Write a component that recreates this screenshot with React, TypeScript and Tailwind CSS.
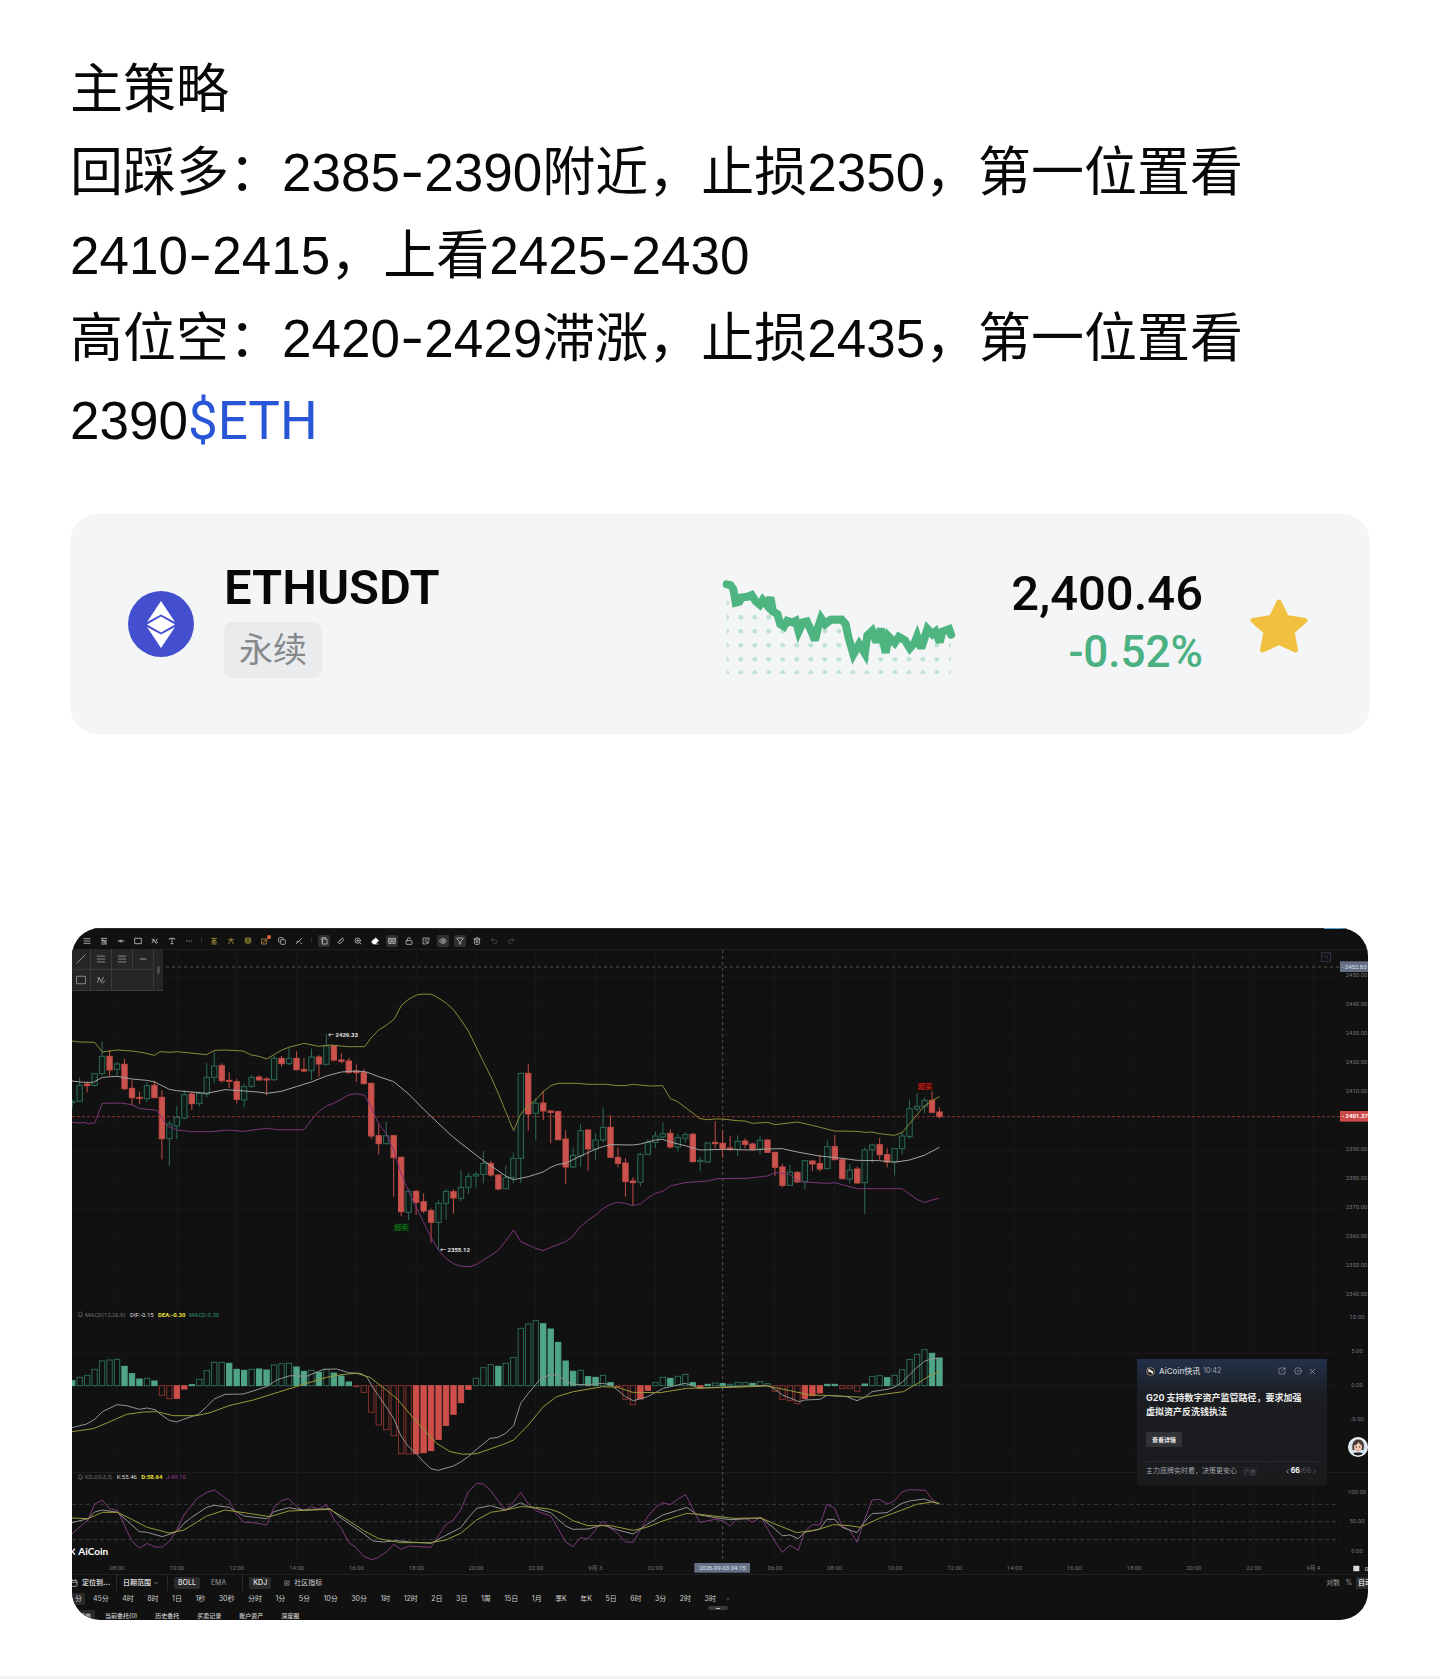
import React from "react";
import {
  AlignJustify,
  Calendar,
  ChevronDown,
  ChevronLeft,
  ChevronRight,
  CircleDot,
  Copy,
  Ellipsis,
  Eraser,
  Eye,
  Filter,
  LockOpen,
  Minus,
  Redo2,
  Slash,
  SquareArrowOutUpRight,
  SquarePen,
  Trash2,
  Type,
  Undo2,
  X,
  ZoomIn,
} from "lucide-react";

/* ---------- chart data (units: a third of a pixel) ---------- */

// kind, open/close top, bottom, high, low
const CANDLES = `g 545 548 537 565|g 496 544 473 544|r 492 497 485 517|g 461 496 461 500|g 409 461 365 467|r 409 450 390 468|g 432 448 426 466|r 433 506 416 511|r 505 533 481 557|r 532 535 515 552|g 497 536 486 547|r 496 533 482 533|r 532 656 511 718|g 612 656 602 738|g 592 618 558 657|g 524 594 512 598|r 522 551 515 570|g 520 551 515 560|g 472 522 430 533|g 438 472 394 490|r 437 482 430 488|r 481 484 457 504|r 485 538 476 550|g 500 540 490 562|g 472 499 466 504|r 471 480 466 482|r 477 480 471 526|g 415 479 407 484|r 415 431 408 440|g 415 431 381 436|r 415 449 394 452|r 448 453 414 456|g 411 452 386 479|r 411 432 406 470|g 378 433 343 436|r 377 420 374 425|r 420 424 400 430|r 423 457 414 462|r 453 458 433 486|r 457 491 447 493|r 490 648 488 656|r 647 671 612 703|g 647 671 606 674|r 647 713 645 830|r 712 875 710 889|g 814 877 806 900|r 814 847 810 885|r 845 873 820 879|r 872 907 866 968|g 850 907 841 990|g 814 850 806 899|r 815 834 808 880|g 802 835 752 843|g 769 802 760 822|g 763 768 755 803|g 730 763 693 790|r 730 765 722 770|r 765 807 762 810|g 773 806 738 808|g 715 772 698 790|g 460 715 458 790|r 460 582 432 632|g 550 580 534 661|r 549 573 512 600|r 573 577 571 670|r 575 659 572 661|r 657 741 630 792|g 706 741 683 745|g 632 708 612 740|r 630 687 628 752|g 660 687 640 720|g 622 660 562 668|r 622 712 586 714|r 712 730 682 742|r 729 785 714 830|r 783 788 772 855|g 703 787 698 798|g 667 703 658 706|g 648 667 635 685|g 641 651 608 655|r 640 681 628 686|g 653 681 642 694|g 644 655 636 668|r 643 725 638 727|g 721 725 712 754|g 669 726 668 728|r 667 671 604 685|r 670 686 630 714|r 684 689 648 692|g 664 688 646 708|r 663 673 655 685|r 672 689 668 692|g 661 687 649 703|r 660 697 658 699|r 697 742 695 768|r 741 796 732 802|g 756 796 733 797|r 757 786 753 788|g 722 785 721 808|r 723 732 722 754|r 731 747 704 754|g 680 746 662 748|r 680 719 645 721|r 719 776 717 778|g 750 777 732 790|r 747 789 740 790|g 690 788 682 882|g 675 689 672 729|r 674 704 654 719|r 704 726 684 742|g 686 724 684 766|g 648 686 636 704|g 566 650 538 656|g 559 567 521 575|g 541 559 532 580|r 541 577 515 579|r 576 590 562 596`
  .split("|")
  .map((row) => {
    const [kind, top, bottom, high, low] = row.split(" ");
    return { up: kind === "g", top: +top, bottom: +bottom, high: +high, low: +low };
  });

// bar ends relative to the MACD pane; an "f" marks a solid bar
const MACD_BARS =
  "302f 292 286 268 243 240 238 259f 281f 297f 295 303f 346 356 355f 327f 314f 298 272 247 247 250f 268f 271f 268 267f 270f 255 251 250 261f 274f 271 277f 268 279f 288f 306f 320 337 397 435 449 467 521 522 521f 518f 512f 478f 436f 403f 368f 328f 295 263 254 259f 250 232 145 132 122 131f 147f 187f 243f 274f 271 290f 292f 286 308f 320 358 374 357f 331f 308 292 295f 289 283 308f 324f 313f 309 311f 313 307 307 310f 305 311 334 358 362 371 355f 347f 339f 313f 313f 325 325 334 312f 289 287 293f 286 269 238 223 209 220f 234f".split(
    " ",
  );

const UPPER =
  "36,363 60,366 104,367 127,396 171,390 215,393 250,398 284,406 300,395 330,397 352,395 440,404 463,391 495,390 550,393 574,405 597,409 620,417 664,391 686,382 732,370 776,379 810,375 866,380 914,380 933,354 956,330 980,315 1003,297 1025,255 1047,237 1070,225 1090,222 1115,223 1137,235 1160,250 1182,271 1203,300 1225,333 1250,384 1270,425 1292,469 1315,520 1337,575 1361,632 1382,582 1404,558 1427,540 1449,516 1472,497 1494,490 1550,490 1584,493 1640,493 1662,496 1696,497 1718,493 1770,498 1808,497 1831,536 1853,545 1920,596 1943,599 1965,597 1988,597 2032,602 2055,603 2077,610 2122,607 2145,614 2212,606 2257,616 2324,633 2391,634 2414,637 2436,636 2458,641 2503,646 2526,638 2548,612 2593,558 2616,542 2638,530";
const MIDDLE =
  "36,483 70,487 100,487 127,472 171,469 215,477 260,481 284,486 328,508 350,512 395,516 440,520 495,509 540,512 595,516 620,520 664,514 709,500 754,486 799,468 844,456 890,453 920,456 956,470 1001,485 1046,522 1090,567 1135,610 1180,652 1225,687 1270,722 1314,752 1337,768 1361,779 1405,770 1427,763 1449,756 1472,742 1494,733 1517,730 1561,708 1606,688 1628,680 1651,674 1718,675 1741,672 1786,660 1808,658 1831,666 1875,677 1920,690 1988,688 2080,690 2122,687 2167,686 2212,696 2279,708 2346,715 2391,721 2458,722 2503,727 2548,720 2593,706 2638,682";
const LOWER =
  "36,607 60,609 75,608 85,611 104,609 127,550 185,549 215,554 240,566 290,571 305,592 320,616 350,630 395,635 455,635 500,630 550,634 620,625 650,629 732,629 754,600 776,575 799,558 821,550 866,525 888,521 914,526 933,560 956,612 978,640 1001,690 1023,760 1046,815 1068,860 1090,905 1113,952 1135,990 1157,1015 1180,1031 1205,1039 1230,1040 1250,1033 1314,992 1337,963 1361,930 1382,965 1427,985 1449,992 1472,982 1517,965 1539,948 1561,920 1584,901 1606,886 1628,866 1651,853 1673,847 1696,850 1718,857 1741,852 1763,834 1786,820 1808,814 1831,798 1875,788 1943,783 1970,776 2060,775 2122,768 2145,758 2189,763 2212,782 2234,786 2301,790 2324,788 2391,806 2526,806 2571,838 2593,848 2616,840 2638,835";
const DIF =
  "36,443 80,432 104,418 127,395 171,374 200,377 238,388 262,384 288,390 300,402 328,421 350,426 370,418 415,403 440,380 463,357 495,343 550,342 620,320 650,300 690,287 740,289 790,268 830,267 866,278 900,280 920,290 940,325 956,347 1001,415 1023,468 1046,500 1068,520 1090,545 1113,566 1135,571 1180,558 1202,546 1225,530 1250,508 1290,475 1314,472 1337,460 1361,437 1382,370 1405,340 1440,298 1472,283 1494,286 1517,303 1539,313 1584,314 1628,310 1651,314 1673,330 1696,350 1720,362 1763,350 1810,325 1875,310 1920,324 2010,320 2122,316 2145,328 2167,345 2217,365 2234,360 2280,358 2301,346 2360,350 2391,362 2414,352 2436,335 2481,328 2503,322 2526,307 2548,285 2571,262 2593,244 2616,236 2638,235";
const DEA =
  "36,455 100,446 150,425 200,403 250,396 290,395 340,407 410,407 450,398 510,376 580,360 660,335 740,310 800,292 850,283 890,280 930,292 970,323 1010,355 1050,402 1090,448 1130,490 1170,515 1210,523 1250,521 1290,507 1330,493 1361,480 1405,435 1427,408 1450,380 1490,350 1540,335 1628,320 1673,322 1718,337 1800,338 1880,325 2020,322 2122,318 2190,332 2250,345 2320,347 2410,352 2470,343 2530,335 2580,306 2610,286 2638,276";
const J_LINE =
  "36,762 60,740 84,720 104,672 127,660 148,686 173,692 195,740 215,782 238,805 262,790 284,801 307,801 328,784 350,750 372,705 412,655 440,637 463,630 485,646 507,662 529,702 552,727 575,727 620,735 642,682 664,662 686,656 709,678 731,693 754,680 776,688 799,674 821,716 844,745 866,787 888,803 911,829 936,839 956,832 980,815 1001,793 1023,808 1046,798 1113,802 1130,775 1157,735 1180,720 1202,690 1225,635 1250,610 1270,612 1292,632 1314,662 1337,690 1361,665 1382,637 1405,672 1427,692 1472,708 1494,745 1517,786 1539,800 1561,773 1584,777 1628,723 1651,745 1673,760 1696,786 1720,787 1741,750 1763,710 1786,683 1808,668 1831,674 1853,658 1877,644 1900,690 1920,727 1965,718 1988,722 2010,738 2032,718 2055,714 2077,727 2103,711 2122,745 2145,785 2167,817 2190,796 2215,811 2234,755 2257,734 2279,735 2301,673 2324,685 2346,738 2369,750 2391,787 2414,718 2436,660 2458,658 2483,672 2503,663 2526,636 2548,629 2596,631 2616,657 2638,674";
const K_LINE =
  "36,728 84,716 104,696 127,690 173,697 195,717 238,755 262,757 307,770 350,755 372,730 395,712 440,682 463,676 507,682 529,695 552,708 620,716 642,695 686,683 731,690 810,686 844,715 888,745 911,761 940,783 970,786 1010,782 1050,786 1113,790 1150,770 1202,743 1225,713 1250,685 1292,677 1337,690 1382,668 1405,680 1427,685 1472,698 1517,738 1539,748 1584,747 1628,735 1673,750 1720,762 1763,732 1808,705 1853,691 1880,682 1910,703 1965,713 2010,719 2103,714 2145,747 2167,767 2190,765 2215,776 2234,757 2279,747 2301,718 2324,718 2346,742 2391,758 2414,725 2436,701 2481,698 2526,670 2548,663 2593,657 2638,672";
const D_LINE =
  "36,714 84,716 127,697 173,697 215,718 262,742 328,759 372,750 440,708 495,690 552,698 630,710 686,693 810,688 866,722 911,752 956,776 1023,788 1113,788 1157,780 1202,760 1250,720 1292,697 1337,690 1382,680 1427,682 1472,688 1500,698 1539,722 1584,737 1651,737 1720,751 1760,742 1808,723 1880,700 1920,703 2020,715 2103,714 2145,732 2210,758 2270,750 2320,734 2369,737 2400,742 2458,715 2526,690 2570,673 2616,666 2638,670";

const TIMES: [number, string][] = [
  [171, "08:00"], [351, "10:00"], [530, "12:00"], [710, "14:00"], [889, "16:00"], [1069, "18:00"], [1248, "20:00"],
  [1427, "22:00"], [1606, "9月 3"], [1786, "02:00"], [2145, "06:00"], [2324, "08:00"], [2504, "10:00"],
  [2684, "12:00"], [2863, "14:00"], [3043, "16:00"], [3222, "18:00"], [3401, "20:00"], [3581, "22:00"], [3760, "9月 4"],
];
const PRICES = ["2450.00", "2440.00", "2430.00", "2420.00", "2410.00", "", "2390.00", "2380.00", "2370.00", "2360.00", "2350.00", "2340.00"];
const OSC: [number, string][] = [[1196, "10.00"], [1299, "5.00"], [1402, "0.00"], [1504, "-5.00"], [1721, "100.00"], [1809, "50.00"], [1898, "0.00"]];
const STEP = 22.43;

function Line({ points, color }: { points: string; color: string }) {
  return <polyline points={points} fill="none" stroke={color} strokeWidth="3" strokeLinejoin="round" />;
}

function Chart() {
  return (
    <svg
      viewBox="36 87 3888 1878"
      className="block w-full font-['Roboto','Noto_Sans_CJK_SC',sans-serif]"
      role="img"
      aria-label="ETHUSDT K线图"
    >
      <g stroke="#191919" strokeWidth="3">
        {TIMES.map(([x]) => (
          <line key={x} x1={x} x2={x} y1="90" y2="1920" />
        ))}
        {PRICES.map((_, i) => (
          <line key={i} x1="36" x2="3840" y1={171 + i * 87} y2={171 + i * 87} />
        ))}
        <line x1="36" x2="3840" y1="1299" y2="1299" />
        <line x1="36" x2="3840" y1="1397" y2="1397" />
        <line x1="36" x2="3840" y1="1602" y2="1602" />
      </g>
      <g stroke="#222222" strokeWidth="3">
        <line x1="36" x2="3924" y1="88" y2="88" />
        <line x1="36" x2="3924" y1="1658" y2="1658" />
      </g>

      <g stroke="#555555" strokeWidth="3" strokeDasharray="9 9">
        <line x1="318" x2="3840" y1="141" y2="141" />
        <line x1="1988" x2="1988" y1="90" y2="1925" />
      </g>
      <g stroke="#3c3c3c" strokeWidth="3" strokeDasharray="12 9">
        <line x1="36" x2="3840" y1="1753" y2="1753" />
        <line x1="36" x2="3840" y1="1805" y2="1805" />
        <line x1="36" x2="3840" y1="1859" y2="1859" />
      </g>
      <line x1="36" x2="3840" y1="590" y2="590" stroke="#8f3330" strokeWidth="3" strokeDasharray="9 6" />

      {CANDLES.map((c, i) => {
        const x = 59 + (i - 1) * STEP;
        const color = c.up ? "#2c6b56" : "#c24c46";
        return (
          <g key={i} stroke={color} strokeWidth="3">
            <line x1={x} x2={x} y1={c.high} y2={c.top} />
            <line x1={x} x2={x} y1={c.bottom} y2={c.low} />
            <rect
              x={x - 8}
              y={c.top}
              width="16"
              height={Math.max(c.bottom - c.top, 2)}
              fill={c.up ? "#0f1a17" : "#cb534d"}
            />
          </g>
        );
      })}

      <Line points={UPPER} color="#8c8a35" />
      <Line points={MIDDLE} color="#a3a3a3" />
      <Line points={LOWER} color="#7b3578" />

      <g fontSize="18" fontWeight="700" fill="#e6e6e6">
        <text x="804" y="350">← 2429.33</text>
        <text x="1140" y="997">← 2355.12</text>
      </g>
      <rect x="1001" y="910" width="46" height="22" fill="#0a2a0c" />
      <text x="1024" y="929" fontSize="21" textAnchor="middle" fill="#12801c">超卖</text>
      <rect x="2573" y="488" width="46" height="22" fill="#3a0a0a" />
      <text x="2595" y="507" fontSize="21" textAnchor="middle" fill="#e0261f">超买</text>

      <g transform="translate(0 1080)">
        {MACD_BARS.map((bar, i) => {
          const y = parseInt(bar, 10);
          const up = y < 317;
          const solid = bar.endsWith("f");
          const color = up ? "#4fa585" : "#cb4f48";
          const dim = up ? "#2c6b56" : "#84322e";
          return (
            <rect
              key={i}
              x={59 + (i - 1) * STEP - 8}
              y={Math.min(y, 317)}
              width="16"
              height={Math.max(Math.abs(y - 317), 2)}
              stroke={solid ? color : dim}
              strokeWidth="3"
              fill={solid ? color : "#111111"}
            />
          );
        })}
        <Line points={DIF} color="#929292" />
        <Line points={DEA} color="#9a9836" />
        <Line points={J_LINE} color="#7f3a7c" />
        <Line points={K_LINE} color="#929292" />
        <Line points={D_LINE} color="#9a9836" />
        <g fontSize="18" fill="#6f6f6f">
          <path d="M54 108h14M56 108v-7a5 5 0 0 1 10 0v7M59 111h4" fill="none" stroke="#6f6f6f" strokeWidth="2" />
          <text x="75" y="110">MACD(12,26,9)</text>
          <text x="210" y="110" fill="#dddddd">DIF:-0.15</text>
          <text x="294" y="110" fill="#e5e233" fontWeight="700">DEA:-0.30</text>
          <text x="387" y="110" fill="#2f8f70">MACD:0.30</text>
          <path d="M54 596h14M56 596v-7a5 5 0 0 1 10 0v7M59 599h4" fill="none" stroke="#6f6f6f" strokeWidth="2" />
          <text x="75" y="598">KDJ(9,3,3)</text>
          <text x="170" y="598" fill="#dddddd">K:55.46</text>
          <text x="244" y="598" fill="#e5e233" fontWeight="700">D:58.64</text>
          <text x="318" y="598" fill="#9b3a97">J:49.10</text>
        </g>
        <path d="M45 806l-8 9 8 9" fill="none" stroke="#ffffff" strokeWidth="4" />
        <text x="55" y="825" fontSize="30" fontWeight="700" fill="#ffffff" className="font-['Lato',sans-serif]">
          AiCoin
        </text>
      </g>

      <g fontSize="18" fill="#74747f" textAnchor="middle">
        {TIMES.map(([x, t]) => (
          <text key={x} x={x} y="1949">{t}</text>
        ))}
        {PRICES.map((p, i) => (
          <text key={i} x="3857" y={171 + i * 87} textAnchor="start">{p}</text>
        ))}
        {OSC.map(([y, t]) => (
          <text key={y} x="3891" y={y}>{t}</text>
        ))}
      </g>

      <rect x="1903" y="1929" width="167" height="29" fill="#667085" />
      <text x="1987" y="1950" fontSize="18" textAnchor="middle" fill="#dfe3ea">2026-09-03 04:15</text>
      <rect x="3840" y="124" width="90" height="32" fill="#667085" />
      <text x="3845" y="147" fontSize="18" fill="#dfe3ea">- 2452.83</text>
      <rect x="3840" y="573" width="90" height="32" fill="#cb4a48" />
      <text x="3845" y="595" fontSize="18" fontWeight="700" fill="#ffffff">- 2401.37</text>
      <path d="M3785 98h27v27h-27zM3791 104l8 7m0 0 5-5m-5 5 6 7" fill="none" stroke="#34344a" strokeWidth="3" />
      <g fill="#dddddd">
        <rect x="3880" y="1937" width="18" height="17" rx="2" />
        <text x="3914" y="1952" fontSize="18">0</text>
      </g>
      <path d="M36 1964H3924" stroke="#242424" strokeWidth="3" />
    </svg>
  );
}

/* ---------- drawing tools ---------- */

type Tool = { icon: React.ReactNode; label: string; tone?: string; on?: boolean };

const glyph = (d: string) => (
  <svg viewBox="0 0 24 24" className="size-2" fill="none" stroke="currentColor" strokeWidth="2.5">
    <path d={d} />
  </svg>
);
const lucide = (Icon: React.ElementType) => <Icon className="size-2" strokeWidth={2.5} />;

const TOOL_GROUPS: Tool[][] = [
  [
    { icon: lucide(AlignJustify), label: "平行线" },
    { icon: glyph("M3 4h18M3 10h18M3 15h18M3 21h18M5 4l14 17"), label: "斐波那契" },
    { icon: glyph("M2 12h20M8 12a3 3 0 1 0 6 0 3 3 0 1 0-6 0"), label: "水平线" },
    { icon: glyph("M2 4h20v16H2z"), label: "矩形" },
    { icon: glyph("M3 19 8 6l5 12 5-13M3 5l5 6M15 20l6-5"), label: "波浪" },
    { icon: lucide(Type), label: "文字" },
    { icon: lucide(Ellipsis), label: "更多", tone: "text-[#666666]" },
  ],
  [
    { icon: glyph("M3 4h18M6 10h12M3 15h18M4 21h16M12 4v17"), label: "主力", tone: "text-[#a8913d]" },
    { icon: glyph("M3 8h18M12 2v7M12 9 4 21M12 9l8 12"), label: "大单", tone: "text-[#a8913d]" },
    { icon: glyph("M4 3h16v13l-8 5-8-5zM8 5v12M12 5v13M16 5v12"), label: "筹码", tone: "text-[#a8913d]" },
    { icon: glyph("M2 6h14v15H2zM5 18 22 3"), label: "信号", tone: "text-[#b58a3a]" },
    { icon: lucide(Copy), label: "复制" },
    { icon: glyph("M3 21 20 4M14 15l7 6M4 14h6"), label: "画笔" },
  ],
  [
    { icon: glyph("M4 2h13v4M7 6h14v15H7zM2 6h5v12"), label: "磁吸", on: true },
    { icon: glyph("M3 16 16 3l5 5L8 21zM10 9l2 2M13 6l2 2M7 12l2 2"), label: "测量" },
    { icon: lucide(ZoomIn), label: "放大" },
    { icon: <Eraser className="size-2" fill="currentColor" strokeWidth={2} />, label: "橡皮", tone: "text-white" },
    { icon: glyph("M2 4h20v15H2zM6 4v15M10 7l4 9M14 7l-4 9M18 4v15"), label: "对比", on: true },
    { icon: lucide(LockOpen), label: "锁定" },
    { icon: glyph("M21 12V3H3v18h9M8 9h9M8 14h4M14 15h7l-5 6z"), label: "备注" },
    { icon: lucide(Eye), label: "显示", on: true },
    { icon: lucide(Filter), label: "筛选", on: true },
    { icon: lucide(Trash2), label: "删除" },
    { icon: lucide(Undo2), label: "撤销", tone: "text-[#4a4a4a]" },
    { icon: lucide(Redo2), label: "重做", tone: "text-[#4a4a4a]" },
  ],
];

function Toolbar() {
  return (
    <div className="relative flex h-[21px] items-end border-t border-[#2a2a2a] pb-0.5 pl-1.5">
      {TOOL_GROUPS.map((group, g) => (
        <React.Fragment key={g}>
          {g > 0 && <span className="mr-[3px] ml-1 mb-1 h-1.5 w-px bg-[#2b2b2b]" />}
          {group.map((tool) => (
            <button
              key={tool.label}
              type="button"
              aria-label={tool.label}
              className={`relative flex h-3 w-[17px] items-center justify-center ${tool.tone ?? "text-[#bdbdbd]"}`}
            >
              <span className={`flex size-3 items-center justify-center rounded-xs ${tool.on ? "bg-[#303030]" : ""}`}>
                {tool.icon}
              </span>
              {tool.label === "信号" && <i className="absolute top-0 right-0.5 size-1 rounded-full bg-[#e8663c]" />}
            </button>
          ))}
        </React.Fragment>
      ))}
      <span className="absolute -top-px right-5 h-px w-6 bg-[#5fa8d8]" />
    </div>
  );
}

function DrawPanel() {
  const cell = "flex items-center justify-center border-r border-b border-[#3a3a3a]";
  return (
    <div className="absolute top-0 left-0 grid h-[42px] grid-cols-[19px_21px_21px_21px_9px] grid-rows-2 bg-[#252525] text-[#9c9c9c]">
      <button type="button" aria-label="线段" className={cell}><Slash className="size-2.5" strokeWidth={2} /></button>
      <button type="button" aria-label="平行线" className={cell}><AlignJustify className="size-2.5" strokeWidth={2} /></button>
      <button type="button" aria-label="通道" className={cell}><AlignJustify className="size-2.5" strokeWidth={2} /></button>
      <button type="button" aria-label="水平线" className={cell}><Minus className="size-2.5" strokeWidth={2.5} /></button>
      <span className="row-span-2 flex items-center justify-center border-b border-[#3a3a3a]">
        <i className="h-2 w-[3px] rounded-full bg-[#4a4a4a]" />
      </span>
      <button type="button" aria-label="矩形" className={cell}>
        <svg viewBox="0 0 24 24" className="size-2.5" fill="none" stroke="currentColor" strokeWidth="2"><path d="M1 3h22v18H1z" /></svg>
      </button>
      <button type="button" aria-label="波浪" className={cell}>
        <svg viewBox="0 0 24 24" className="size-2.5" fill="none" stroke="currentColor" strokeWidth="2"><path d="M3 19 8 6l5 12 5-13M3 5l5 6M15 20l7-6" /></svg>
      </button>
      <span className="col-span-2 border-r border-b border-[#3a3a3a]" />
    </div>
  );
}

/* ---------- news popup ---------- */

function NewsPopup() {
  return (
    <aside className="absolute top-[410px] right-[41px] flex h-[126px] w-[190px] flex-col bg-linear-to-b from-[#22304a] via-[#1b1d21] via-30% to-[#1a1b1d] px-[9px] text-[#a0a4ab]">
      <header className="flex h-6 items-center text-[7px]">
        <svg viewBox="0 0 24 24" className="mr-1 size-[9px] shrink-0">
          <circle cx="12" cy="12" r="10.5" fill="#1a1a1a" stroke="#b9a68a" strokeWidth="2" />
          <path d="M5 8c5-1 8 0 9 4s3 4 5 3M6 14c3-4 9-4 12-1" fill="none" stroke="#ffffff" strokeWidth="3" />
        </svg>
        <b className="text-[8px] font-medium whitespace-nowrap text-[#c9ccd2]">AiCoin快讯</b>
        <time className="ml-[3px]">10:42</time>
        <button type="button" aria-label="打开" className="ml-auto"><SquareArrowOutUpRight className="size-2" strokeWidth={2} /></button>
        <button type="button" aria-label="设置" className="ml-2"><CircleDot className="size-2" strokeWidth={2} /></button>
        <button type="button" aria-label="关闭" className="mr-px ml-1.5"><X className="size-[9px]" strokeWidth={2} /></button>
      </header>
      <h2 className="mt-2 text-[9px] leading-[14px] font-bold whitespace-nowrap text-[#eeeeee]">
        G20 支持数字资产监管路径，要求加强
        <br />
        虚拟资产反洗钱执法
      </h2>
      <button type="button" className="mt-[13px] h-[15px] w-9 rounded-xs bg-[#303236] text-[6px] font-bold text-[#eeeeee]">
        查看详情
      </button>
      <footer className="mt-3.5 flex items-center border-t border-[#2a2b2e] pt-1 text-[7px] whitespace-nowrap">
        主力底牌实时看，决策更安心
        <span className="ml-1.5 bg-[#222326] px-px text-[6px] text-[#55585e]">广告</span>
        <span className="ml-auto flex items-center">
          <ChevronLeft className="size-[7px]" strokeWidth={3} />
          <b className="text-white">66</b>
          <span className="text-[#55585e]">/66</span>
          <ChevronRight className="size-[7px] text-[#55585e]" strokeWidth={3} />
        </span>
      </footer>
    </aside>
  );
}

function Avatar() {
  return (
    <svg viewBox="0 0 40 40" className="absolute top-[488px] right-0 size-5" role="img" aria-label="客服">
      <defs>
        <clipPath id="face"><circle cx="20" cy="20" r="17" /></clipPath>
      </defs>
      <circle cx="20" cy="20" r="20" fill="#f2f6f8" />
      <g clipPath="url(#face)">
        <rect width="40" height="40" fill="#cfe0ea" />
        <path d="M9 26C7 10 13 5 21 5s13 7 10 21z" fill="#4b3836" />
        <ellipse cx="20" cy="20" rx="8" ry="10" fill="#f0cbb8" />
        <path d="M12 17c5-1 8-4 9-7 2 4 4 6 8 7-1-9-5-11-9-11s-9 3-8 11z" fill="#4b3836" />
        <path d="M8 40c0-8 6-9 12-9s12 1 12 9z" fill="#1d1d22" />
        <circle cx="16.500" cy="20" r="1.300" fill="#332222" />
        <circle cx="23.500" cy="20" r="1.300" fill="#332222" />
        <path d="M18 26q2 1.500 4 0" fill="none" stroke="#c65a58" strokeWidth="1.500" />
      </g>
    </svg>
  );
}

/* ---------- bottom controls ---------- */

const PERIODS = ["45分", "4时", "8时", "1日", "1秒", "30秒", "分时", "1分", "5分", "10分", "30分", "1时", "12时", "2日", "3日", "1周", "15日", "1月", "季K", "年K", "5日", "6时", "3分", "2时", "3时"];
const TABS = ["当前委托(0)", "历史委托", "买卖记录", "账户资产", "深度图"];

function BottomBars() {
  const chip = "h-3 rounded-xs bg-[#2a2a2a] px-1 font-medium text-[#e2e2e2]";
  return (
    <div className="flex h-[45px] flex-col overflow-hidden text-[7px] leading-3 whitespace-nowrap text-[#d0d0d0]">
      <div className="flex h-4 shrink-0 items-center">
        <button type="button" className="flex items-center font-bold">
          <Calendar className="mr-1 -ml-0.5 size-2" strokeWidth={2} />定位到...
        </button>
        <span className="mx-1.5 h-4 w-px bg-[#2a2a2a]" />
        <button type="button" className="flex items-center gap-0.5 font-bold">
          日期范围<ChevronDown className="size-1.5" strokeWidth={2} />
        </button>
        <span className="mr-1.5 ml-2 h-4 w-px bg-[#2a2a2a]" />
        <button type="button" className={chip}>BOLL</button>
        <button type="button" className="ml-[11px] text-[#9a9a9a]">EMA</button>
        <span className="mr-1.5 ml-4 h-4 w-px bg-[#2a2a2a]" />
        <button type="button" className={chip}>KDJ</button>
        <button type="button" className="ml-[13px] flex items-center gap-1">
          <SquarePen className="size-1.5" strokeWidth={2} />社区指标
        </button>
        <button type="button" className="ml-auto text-[#9a9a9a]">对数</button>
        <button type="button" className="ml-[5px] text-[#9a9a9a]">%</button>
        <button type="button" className="ml-1 w-3 overflow-hidden bg-[#2a2a2a] pl-0.5 text-left font-bold">自动</button>
      </div>
      <div className="flex h-4 shrink-0 items-center">
        <button type="button" className="w-[13px] bg-[#2a2a2a] text-center">分</button>
        <div className="ml-2 flex w-[623px] justify-between">
          {PERIODS.map((p) => (
            <button key={p} type="button">{p}</button>
          ))}
        </div>
        <button type="button" aria-label="移除周期" className="ml-2.5 text-[#777777]"><X className="size-1" strokeWidth={3} /></button>
      </div>
      <div className="-mt-px ml-[636px] flex h-1 w-5 shrink-0 items-center justify-center rounded-xs bg-[#3a3a3a]">
        <span className="h-px w-1 bg-[#c0c0c0]" />
      </div>
      <div className="flex shrink-0 gap-[18px] text-[6px]">
        <button type="button" className="-mr-2 w-[23px] bg-[#2a2a2a] pr-1 text-right">跟单</button>
        {TABS.map((t) => (
          <button key={t} type="button" className="font-medium">{t}</button>
        ))}
      </div>
    </div>
  );
}

/* ---------- ticker card ---------- */

// y and index of the last dot in each row
const DOT_ROWS: [number, number][] = [[187, 0], [229, 3], [271, 8], [313, 16], [355, 16], [395, 16]];

function Sparkline() {
  return (
    <svg viewBox="50 115 575 290" preserveAspectRatio="none" className="h-[97px] w-[235px] shrink-0" role="img" aria-label="价格走势">
      <defs>
        <clipPath id="dots"><rect x="64" y="170" width="548" height="229" /></clipPath>
      </defs>
      <g clipPath="url(#dots)" fill="#bfe3d3">
        {DOT_ROWS.flatMap(([y, last]) =>
          Array.from({ length: last + 1 }, (_, i) => (
            <ellipse key={`${y}-${i}`} cx={64 + i * 34.3} cy={y} rx="6" ry="7" />
          )),
        )}
      </g>
      <polyline
        points="64,131 73,133 80,145 86,186 95,183 100,170 115,168 125,163 135,182 145,192 152,178 163,194 171,170 177,212 188,220 195,250 204,257 212,240 225,245 233,240 240,272 250,245 260,242 270,268 280,298 287,262 295,232 305,250 318,237 345,236 355,250 362,290 374,340 388,310 402,338 408,284 420,270 430,304 441,264 453,336 460,287 475,306 485,288 500,298 512,322 524,305 530,286 540,322 546,300 555,264 567,280 575,272 585,304 592,272 608,265 613,282"
        fill="none"
        stroke="#4fb580"
        strokeWidth="8"
        strokeLinecap="round"
        strokeLinejoin="miter"
        strokeMiterlimit="3"
        vectorEffect="non-scaling-stroke"
      />
    </svg>
  );
}

function TickerCard() {
  return (
    <section className="mt-[52px] flex h-[220px] items-center rounded-[28px] bg-[#f3f5f7] pr-[61px] pl-[58px]">
      <svg viewBox="0 0 66 66" className="size-[66px] shrink-0" role="img" aria-label="ETH">
        <circle cx="33" cy="33" r="33" fill="#434fcf" />
        <path d="M33 10 47 31 33 23.500 19 31z" fill="#ffffff" />
        <path d="M33 25.500 47 33.500 33 41.500 19 33.500z" fill="#ffffff" />
        <path d="M19 36 33 43.500 47 36 33 57z" fill="#ffffff" />
      </svg>
      <div className="ml-[30px] flex flex-col items-start pb-3">
        <h1 className="font-['Roboto',sans-serif] text-[49px] leading-[60px] font-semibold text-[#070808]">ETHUSDT</h1>
        <span className="mt-1 rounded-lg bg-[#e9ebed] px-[15px] text-[34px] leading-[56px] text-[#85898c]">永续</span>
      </div>
      <div className="ml-auto pt-1.5"><Sparkline /></div>
      <div className="ml-[46px] w-[201px] pb-0.5 text-right font-['Roboto',sans-serif] text-[#070808]">
        <p className="text-[49px] leading-[58px] font-medium">2,400.46</p>
        <p className="text-[44px] leading-[58px] font-medium text-[#4bb182]">-0.52%</p>
      </div>
      <button type="button" aria-label="收藏" className="ml-[46px] shrink-0 pt-1">
        <svg viewBox="0 0 60 56" className="h-14 w-[60px]">
          <path
            d="M30 4 37.500 19.500 56 22.500 43 34 46.500 52 30 44.500 13.500 52 17 34 4 22.500 22.500 19.500z"
            fill="#f1c040"
            stroke="#f1c040"
            strokeWidth="5"
            strokeLinejoin="round"
          />
        </svg>
      </button>
    </section>
  );
}

function Range({ from, to }: { from: string; to: string }) {
  return (
    <>
      {from}
      <span className="font-['Inter',sans-serif]">-</span>
      {to}
    </>
  );
}

export default function App() {
  return (
    <div className="min-h-screen bg-white font-['Inter','Noto_Sans_CJK_SC',sans-serif]" lang="zh-CN">
      <main className="mx-auto px-[70px] pt-[49px] pb-[56px]">
        <article className="font-['Liberation_Sans','Noto_Sans_CJK_SC',sans-serif] text-[53px] leading-[82px] whitespace-nowrap text-[#070808]">
          <p>主策略</p>
          <p>回踩多：<Range from="2385" to="2390" />附近，止损2350，第一位置看</p>
          <p><Range from="2410" to="2415" />，上看<Range from="2425" to="2430" /></p>
          <p>高位空：<Range from="2420" to="2429" />滞涨，止损2435，第一位置看</p>
          <p>2390<a href="#eth" className="font-['Roboto',sans-serif] text-[#2856d6]">$ETH</a></p>
        </article>
        <TickerCard />
        <figure className="mx-0.5 mt-[194px] overflow-hidden rounded-[28px] bg-[#111111]">
          <Toolbar />
          <div className="relative">
            <Chart />
            <DrawPanel />
            <NewsPopup />
            <Avatar />
          </div>
          <BottomBars />
        </figure>
      </main>
      <hr className="border-t-[3px] border-[#f4f5f6]" />
    </div>
  );
}
